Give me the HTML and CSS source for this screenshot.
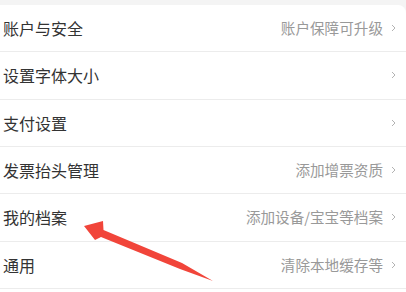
FILE: index.html
```html
<!DOCTYPE html>
<html lang="zh-CN">
<head>
<meta charset="utf-8">
<link rel="stylesheet" href="styles.css">
</head>
<body>
<div class="page">
  <div class="card">
    <div class="row"><span class="label">账户与安全</span><span class="value">账户保障可升级</span><svg class="chev" viewBox="0 0 5 8"><polyline points="1,1 4,4 1,7"/></svg></div>
    <div class="row"><span class="label">设置字体大小</span><span class="value"></span><svg class="chev" viewBox="0 0 5 8"><polyline points="1,1 4,4 1,7"/></svg></div>
    <div class="row"><span class="label">支付设置</span><span class="value"></span><svg class="chev" viewBox="0 0 5 8"><polyline points="1,1 4,4 1,7"/></svg></div>
    <div class="row"><span class="label">发票抬头管理</span><span class="value">添加增票资质</span><svg class="chev" viewBox="0 0 5 8"><polyline points="1,1 4,4 1,7"/></svg></div>
    <div class="row"><span class="label">我的档案</span><span class="value">添加设备/宝宝等档案</span><svg class="chev" viewBox="0 0 5 8"><polyline points="1,1 4,4 1,7"/></svg></div>
    <div class="row"><span class="label">通用</span><span class="value">清除本地缓存等</span><svg class="chev" viewBox="0 0 5 8"><polyline points="1,1 4,4 1,7"/></svg></div>
    <div class="row"></div>
  </div>
  <svg class="arrow" viewBox="0 0 406 292" width="406" height="292">
    <polygon points="84,226 103,221 103.5,230 182,263 213,281 180,269 101,237 95,240"/>
  </svg>
</div>
</body>
</html>
```
FILE: styles.css
```css
html, body {
  margin: 0;
  padding: 0;
  background: #f4f4f4;
}
body {
  width: 406px;
  height: 292px;
  overflow: hidden;
  font-family: "Noto Sans CJK SC", "Noto Sans", sans-serif;
}
.page {
  position: relative;
  width: 406px;
  height: 292px;
  padding-top: 5px;
  box-sizing: border-box;
  overflow: hidden;
}
.card {
  background: #fff;
  border-top-right-radius: 8px;
}
.row {
  display: flex;
  align-items: center;
  height: 47.33px;
  box-sizing: border-box;
  border-bottom: 1px solid #ececec;
  padding: 0 10px 0 3px;
}
.label {
  flex: 1;
  font-size: 16px;
  color: #333;
  line-height: 1;
}
.value {
  font-size: 14.6px;
  color: #999;
  line-height: 1;
  margin-right: 8px;
}
.chev {
  width: 5px;
  height: 8px;
  fill: none;
  stroke: #aaa;
  stroke-width: 0.9;
}
.arrow {
  position: absolute;
  left: 0;
  top: 0;
  fill: #f1453a;
}
```
